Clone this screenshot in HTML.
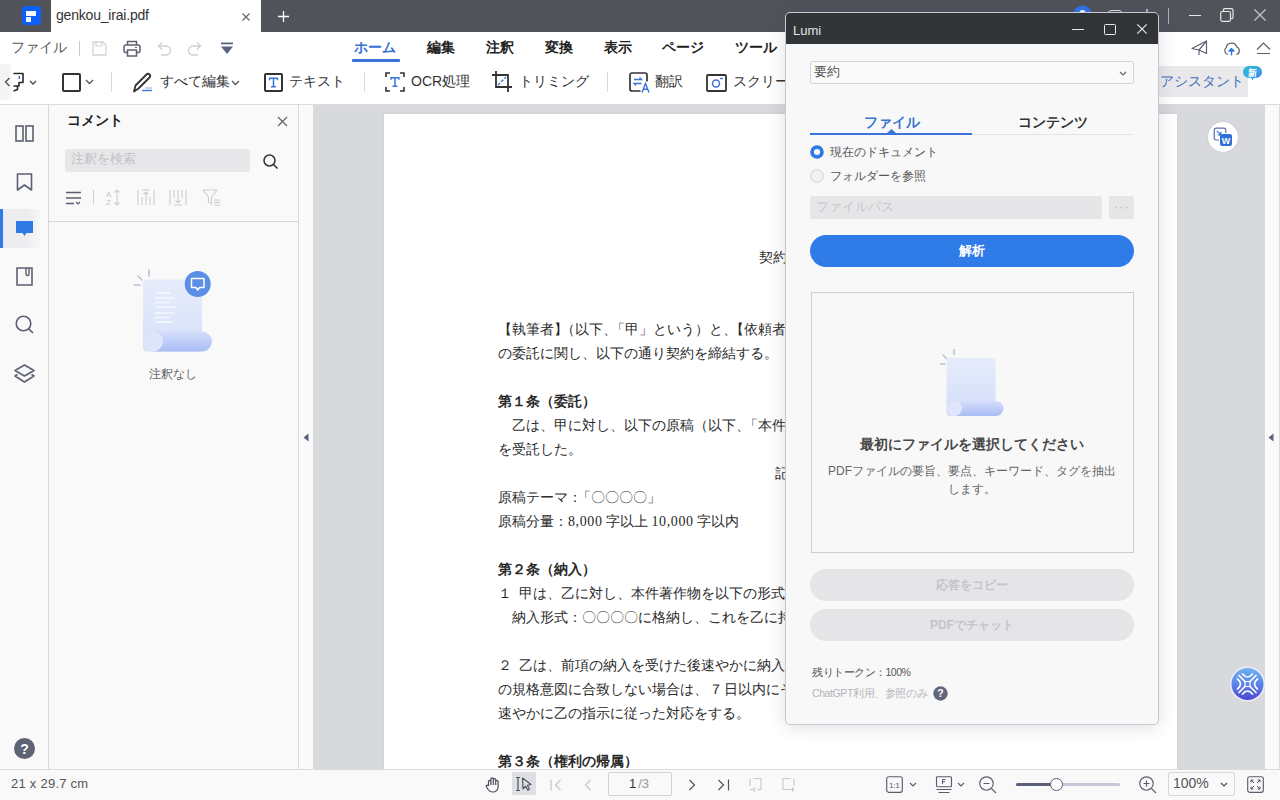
<!DOCTYPE html>
<html lang="ja">
<head>
<meta charset="utf-8">
<style>
*{box-sizing:border-box;margin:0;padding:0}
html,body{width:1280px;height:800px;overflow:hidden;background:#fff;font-family:"Liberation Sans",sans-serif;color:#333}
.a{position:absolute}
svg{position:absolute;overflow:visible}
.t{white-space:nowrap}
.dt{font-family:"Liberation Serif",serif;font-size:14px;line-height:16px;color:#2a2a2a}
.db{font-weight:bold}
.mb{font-size:14px;line-height:16px;font-weight:bold;color:#222}
#titlebar{left:0;top:0;width:1280px;height:32px;background:#50535a}
#tab{left:51px;top:0;width:210px;height:32px;background:#fff}
#toolbar{left:0;top:32px;width:1280px;height:73px;background:#fff;border-bottom:1px solid #dcdcdf}
#lside{left:0;top:105px;width:49px;height:664px;background:#f9f9fa;border-right:1px solid #d8d8db}
#cpanel{left:49px;top:105px;width:250px;height:664px;background:#f9f9fa;border-right:1px solid #d8d8db}
#handle{left:299px;top:105px;width:14px;height:664px;background:#fafafa}
#docarea{left:313px;top:105px;width:952px;height:664px;background:#d8d9dc}
#page{left:384px;top:114px;width:793px;height:655px;background:#fff;box-shadow:0 0 3px rgba(0,0,0,.06)}
#rstrip{left:1265px;top:105px;width:15px;height:664px;background:#fafafa;border-right:1px solid #dcdce0}
#status{left:0;top:769px;width:1280px;height:31px;background:#f9f9fa;border-top:1px solid #dcdcdf}
#dlg{left:785px;top:12px;width:374px;height:713px;background:#f8f8f9;border:1px solid #c8c8d0;border-radius:5px;overflow:hidden;box-shadow:0 2px 18px rgba(60,60,100,.16)}
#dlgtitle{left:0;top:0;width:372px;height:31px;background:#323538}
</style>
</head>
<body>
<div id="titlebar" class="a"></div>
<div id="tab" class="a"></div>
<svg style="left:1073px;top:5px" width="20" height="20"><circle cx="9.5" cy="10" r="9.5" fill="#2f74e8"/><circle cx="9.5" cy="8" r="3" fill="#fff"/></svg>
<div class="a" style="left:1108px;top:10px;width:14px;height:12px;border:1.3px solid #e0e0e0;border-radius:3px"></div>
<svg style="left:1141px;top:8px" width="12" height="14"><path d="M6 1V13M1 6H11" stroke="#e0e0e0" stroke-width="1.3"/></svg>
<div class="a" style="left:1168px;top:8px;width:1px;height:16px;background:#aeb0b6"></div>
<div class="a" style="left:1189px;top:15px;width:12px;height:1.2px;background:#e6e6e6"></div>
<svg style="left:1220px;top:8px" width="14" height="14"><path d="M3.5 3.5V1.5A1 1 0 0 1 4.5 0.7H11.5A1.5 1.5 0 0 1 13 2.2V9.5A1 1 0 0 1 12 10.5H10.5" fill="none" stroke="#e6e6e6" stroke-width="1.2"/><rect x="0.7" y="3.5" width="9.8" height="9.8" rx="1.5" fill="none" stroke="#e6e6e6" stroke-width="1.2"/></svg>
<svg style="left:1254px;top:9px" width="12" height="12"><path d="M0.5 0.5L11.5 11.5M11.5 0.5L0.5 11.5" stroke="#c8c8cc" stroke-width="1.2"/></svg>
<div id="toolbar" class="a"></div>
<!-- tab contents -->
<div class="a" style="left:22px;top:6px;width:19px;height:19px;background:#0d5ffb;border-radius:4px"></div>
<div class="a" style="left:26px;top:11px;width:10px;height:5px;background:#f4fbff"></div>
<div class="a" style="left:26px;top:17px;width:5px;height:5px;background:#eef8ff"></div>
<div class="a t" style="left:56px;top:6px;font-size:14px;line-height:18px;color:#333;letter-spacing:-0.2px">genkou_irai.pdf</div>
<svg style="left:242px;top:13px" width="9" height="8"><path d="M0.5 0.5L7.5 7.5M7.5 0.5L0.5 7.5" stroke="#666" stroke-width="1.2"/></svg>
<svg style="left:278px;top:11px" width="11" height="11"><path d="M5.5 0V11M0 5.5H11" stroke="#fff" stroke-width="1.3"/></svg>
<!-- row1 -->
<div class="a t" style="left:11px;top:39px;font-size:14px;line-height:16px;color:#555">ファイル</div>
<div class="a" style="left:79px;top:41px;width:1px;height:15px;background:#c8c8d6"></div>
<!-- save -->
<svg style="left:92px;top:41px" width="15" height="15"><path d="M1 1H11L14 4V14H1Z" fill="none" stroke="#d4d4d8" stroke-width="1.3"/><path d="M4 1V5H10V1" fill="none" stroke="#d4d4d8" stroke-width="1.2"/></svg>
<!-- print -->
<svg style="left:123px;top:40px" width="18" height="17"><path d="M4.5 5V1.5H13.5V5" fill="none" stroke="#5c6070" stroke-width="1.5"/><rect x="1" y="5" width="16" height="7.5" rx="2" fill="none" stroke="#5c6070" stroke-width="1.5"/><rect x="4.5" y="10" width="9" height="6" fill="#fff" stroke="#5c6070" stroke-width="1.5"/><path d="M12 7.5h2" stroke="#5c6070" stroke-width="1.2"/></svg>
<!-- undo -->
<svg style="left:156px;top:41px" width="16" height="15"><path d="M3 5H10A4.5 4.5 0 0 1 10 14H5" fill="none" stroke="#d0d0d6" stroke-width="1.4"/><path d="M6 1.5L2.5 5L6 8.5" fill="none" stroke="#d0d0d6" stroke-width="1.4"/></svg>
<!-- redo -->
<svg style="left:187px;top:41px" width="16" height="15"><path d="M13 5H6A4.5 4.5 0 0 0 6 14H11" fill="none" stroke="#d0d0d6" stroke-width="1.4"/><path d="M10 1.5L13.5 5L10 8.5" fill="none" stroke="#d0d0d6" stroke-width="1.4"/></svg>
<!-- quick access dropdown -->
<svg style="left:220px;top:42px" width="14" height="13"><rect x="1" y="0.5" width="12" height="1.8" fill="#5b6282"/><path d="M1 4.5H13L7 12Z" fill="#5b6282"/></svg>
<!-- menu tabs -->
<div class="a t mb" style="left:354px;top:39px;color:#3570d4">ホーム</div>
<div class="a" style="left:352px;top:59px;width:48px;height:3px;background:#3a74d8;border-radius:1px"></div>
<div class="a t mb" style="left:427px;top:39px">編集</div>
<div class="a t mb" style="left:486px;top:39px">注釈</div>
<div class="a t mb" style="left:545px;top:39px">変換</div>
<div class="a t mb" style="left:604px;top:39px">表示</div>
<div class="a t mb" style="left:662px;top:39px">ページ</div>
<div class="a t mb" style="left:735px;top:39px">ツール</div>
<!-- right row1 icons -->
<svg style="left:1191px;top:40px" width="18" height="17"><path d="M1 8.5L15.5 1V13.5L8 10Z" fill="none" stroke="#5c6070" stroke-width="1.2" stroke-linejoin="round"/><path d="M15.5 1L8 10V15" fill="none" stroke="#5c6070" stroke-width="1.2"/></svg>
<svg style="left:1223px;top:41px" width="19" height="15"><path d="M5 13.5A4 4 0 0 1 3.2 6.5A5.5 5.5 0 0 1 13.8 6A4 4 0 0 1 13.5 13.5" fill="none" stroke="#5c6070" stroke-width="1.2"/><path d="M8.5 14.5V7.5M6 10L8.5 7.5L11 10Z" fill="#2f7ae5" stroke="#2f7ae5" stroke-width="1.4" stroke-linejoin="round"/></svg>
<svg style="left:1256px;top:42px" width="16" height="13"><path d="M1 7.5L7.5 1L14 7.5M1 11.5H14" fill="none" stroke="#5c6070" stroke-width="1.2"/></svg>
<!-- row2 tools -->
<div class="a" style="left:0;top:64px;width:13px;height:36px;background:linear-gradient(90deg,#f4f4f7 70%,#fff)"></div>
<svg style="left:4px;top:77px" width="7" height="10"><path d="M5.5 1L1.5 5L5.5 9" fill="none" stroke="#555" stroke-width="1.4"/></svg>
<svg style="left:12px;top:72px" width="14" height="21"><path d="M1.5 1.5H11V10.5H7V14H1.5M5.5 14V17.5L1.5 19" fill="none" stroke="#2a2a2a" stroke-width="1.6" stroke-linejoin="round"/><path d="M7.3 4V7" stroke="#2f5fb0" stroke-width="1.4"/></svg>
<svg style="left:29px;top:80px" width="9" height="6"><path d="M1 1L4 4L7 1" fill="none" stroke="#444" stroke-width="1.3"/></svg>
<div class="a" style="left:62px;top:73px;width:19px;height:19px;border:2px solid #333;border-radius:2px"></div>
<svg style="left:85px;top:79px" width="9" height="6"><path d="M1 1L4.5 4.5L8 1" fill="none" stroke="#555" stroke-width="1.3"/></svg>
<div class="a" style="left:111px;top:72px;width:1px;height:20px;background:#d8d8de"></div>
<svg style="left:132px;top:72px" width="24" height="22"><path d="M2 19.5L3.5 13.5L14.5 2.5A2.1 2.1 0 0 1 17.5 5.5L6.5 16.5Z" fill="none" stroke="#333" stroke-width="1.8" stroke-linejoin="round"/><path d="M10 18.5H20" stroke="#3a74d8" stroke-width="1.4"/><path d="M13 16H20" stroke="#3a74d8" stroke-width="1" opacity=".6"/></svg>
<div class="a t" style="left:160px;top:73px;font-size:14px;line-height:16px;color:#333">すべて編集</div>
<svg style="left:231px;top:80px" width="9" height="6"><path d="M1 1L4.5 4.5L8 1" fill="none" stroke="#555" stroke-width="1.3"/></svg>
<div class="a" style="left:264px;top:73px;width:19px;height:19px;border:2px solid #333;border-radius:2px"></div>
<svg style="left:264px;top:73px" width="19" height="19"><path d="M5 5.3H14M5.6 4.6V7.3M13.4 4.6V7.3M9.5 5.3V13.8M7 13.8H12" fill="none" stroke="#3a74d8" stroke-width="1.5"/></svg>
<div class="a t" style="left:289px;top:73px;font-size:14px;line-height:16px;color:#333">テキスト</div>
<div class="a" style="left:364px;top:72px;width:1px;height:20px;background:#d8d8de"></div>
<svg style="left:385px;top:72px" width="20" height="20"><path d="M1 5V1H5M15 1H19V5M19 15V19H15M5 19H1V15" fill="none" stroke="#333" stroke-width="1.6"/></svg>
<svg style="left:385px;top:72px" width="20" height="20"><path d="M5.5 5.8H14.5M6.1 5.1V7.8M13.9 5.1V7.8M10 5.8V14.3M7.5 14.3H12.5" fill="none" stroke="#3a74d8" stroke-width="1.5"/></svg>
<div class="a t" style="left:411px;top:73px;font-size:14px;line-height:16px;color:#333">OCR処理</div>
<svg style="left:491px;top:70px" width="22" height="23"><path d="M5 1V17H21M1 5H17V22" fill="none" stroke="#333" stroke-width="1.8"/><path d="M7 15L15 7" stroke="#3a74d8" stroke-width="1.4" stroke-dasharray="3 1.5"/></svg>
<div class="a t" style="left:519px;top:73px;font-size:14px;line-height:16px;color:#333">トリミング</div>
<div class="a" style="left:607px;top:72px;width:1px;height:20px;background:#d8d8de"></div>
<svg style="left:629px;top:72px" width="22" height="21"><path d="M11.5 19H3A2 2 0 0 1 1 17V3A2 2 0 0 1 3 1H16A2 2 0 0 1 18 3V9.5" fill="none" stroke="#333" stroke-width="1.7"/><path d="M5 7.5H12.5L10.5 5.5M12.5 11.5H5L7 13.5" fill="none" stroke="#3a74d8" stroke-width="1.3"/><path d="M13 20.5L16.5 11.5L20 20.5M14.2 17.3H18.8" fill="none" stroke="#3a74d8" stroke-width="1.4"/></svg>
<div class="a t" style="left:655px;top:73px;font-size:14px;line-height:16px;color:#333">翻訳</div>
<svg style="left:706px;top:72px" width="21" height="20"><rect x="1" y="3" width="19" height="16" rx="1" fill="none" stroke="#333" stroke-width="1.8"/><circle cx="10" cy="11.5" r="3.5" fill="none" stroke="#3a74d8" stroke-width="1.5"/><path d="M14 6.5H17" stroke="#3a74d8" stroke-width="1.4"/></svg>
<div class="a t" style="left:733px;top:73px;font-size:14px;line-height:16px;color:#333">スクリーンショット</div>
<!-- AI assistant -->
<div class="a" style="left:1100px;top:66px;width:148px;height:31px;background:#e9e9ec"></div>
<div class="a t" style="left:1160px;top:73px;font-size:14px;line-height:16px;color:#3f6fbf">アシスタント</div>
<svg style="left:1242px;top:65px" width="22" height="17"><defs><linearGradient id="gnew" x1="0" y1="0" x2="1" y2="1"><stop offset="0" stop-color="#2bbcc8"/><stop offset=".6" stop-color="#3aa0e8"/><stop offset="1" stop-color="#2f74e0"/></linearGradient></defs><path d="M7 1H14A6 6 0 0 1 14 13H12L10 15.5L9.5 13H7A6 6 0 0 1 7 1Z" fill="url(#gnew)"/><text x="10.5" y="11" font-size="9" font-weight="bold" fill="#fff" text-anchor="middle">新</text></svg>

<div id="lside" class="a"></div>
<div id="cpanel" class="a"></div>
<div id="handle" class="a"></div>
<!-- left sidebar icons -->
<svg style="left:15px;top:125px" width="19" height="17"><rect x="1" y="1" width="7" height="15" fill="none" stroke="#5c6070" stroke-width="1.6"/><rect x="11" y="1" width="7" height="15" fill="none" stroke="#5c6070" stroke-width="1.6"/></svg>
<svg style="left:16px;top:173px" width="17" height="18"><path d="M1.5 1H15.5V17L8.5 12L1.5 17Z" fill="none" stroke="#5c6070" stroke-width="1.6" stroke-linejoin="round"/></svg>
<div class="a" style="left:0;top:209px;width:40px;height:39px;background:linear-gradient(90deg,#ededf0 70%,#f7f7f8)"></div>
<div class="a" style="left:0;top:209px;width:3px;height:39px;background:#2f7ae5"></div>
<svg style="left:15px;top:220px" width="19" height="18"><path d="M1 1H18V13H11.5L9.5 16L7.5 13H1Z" fill="#2f7ae5"/></svg>
<svg style="left:16px;top:267px" width="17" height="19"><path d="M1 1H16V18H1Z" fill="none" stroke="#5c6070" stroke-width="1.6"/><path d="M10 1V7A1.5 1.5 0 0 0 13 7V1" fill="none" stroke="#5c6070" stroke-width="1.4"/></svg>
<svg style="left:15px;top:315px" width="19" height="20"><circle cx="8.5" cy="8.5" r="7.3" fill="none" stroke="#5c6070" stroke-width="1.6"/><path d="M13.8 13.8L18 18" stroke="#5c6070" stroke-width="1.7"/></svg>
<svg style="left:14px;top:364px" width="21" height="20"><path d="M10.5 1L20 6.5L10.5 12L1 6.5Z" fill="none" stroke="#5c6070" stroke-width="1.6" stroke-linejoin="round"/><path d="M3.5 10.5L1 12L10.5 18L20 12L17.5 10.5" fill="none" stroke="#5c6070" stroke-width="1.6" stroke-linejoin="round"/></svg>
<svg style="left:14px;top:738px" width="21" height="21"><circle cx="10.5" cy="10.5" r="10.5" fill="#5e6275"/><text x="10.5" y="15.5" font-size="14" font-weight="bold" fill="#fff" text-anchor="middle" font-family="Liberation Sans">?</text></svg>
<!-- comment panel -->
<div class="a t" style="left:67px;top:112px;font-size:14px;line-height:16px;font-weight:bold;color:#222">コメント</div>
<svg style="left:277px;top:116px" width="11" height="11"><path d="M1 1L10 10M10 1L1 10" stroke="#666" stroke-width="1.3"/></svg>
<div class="a" style="left:65px;top:149px;width:185px;height:23px;background:#e7e7e9;border-radius:3px"></div>
<div class="a t" style="left:71px;top:152px;font-size:12.5px;line-height:15px;color:#c2c2c6">注釈を検索</div>
<svg style="left:263px;top:154px" width="16" height="15"><circle cx="6.5" cy="6.5" r="5.5" fill="none" stroke="#333" stroke-width="1.5"/><path d="M10.5 10.5L14.5 14.5" stroke="#333" stroke-width="1.6"/></svg>
<svg style="left:66px;top:190px" width="16" height="16"><path d="M0 2.5H15M0 8H15M0 13.5H8" stroke="#5c6070" stroke-width="1.3"/><path d="M10 12L12 14L14 12" fill="none" stroke="#5c6070" stroke-width="1.2"/></svg>
<div class="a" style="left:93px;top:190px;width:1px;height:14px;background:#d0d0d6"></div>
<svg style="left:106px;top:189px" width="16" height="17"><text x="0" y="8" font-size="8" fill="#c8c8ce" font-family="Liberation Sans">A</text><text x="0" y="16" font-size="8" fill="#c8c8ce" font-family="Liberation Sans">Z</text><path d="M11 1V16M8.5 3.5L11 1L13.5 3.5M8.5 13.5L11 16L13.5 13.5" fill="none" stroke="#cdcdd3" stroke-width="1.1"/></svg>
<svg style="left:137px;top:189px" width="18" height="17"><path d="M1 1V16M17 1V16M5 1H13M9 3V16M6.5 5.5L9 3L11.5 5.5M5 8V16M13 8V16" fill="none" stroke="#cdcdd3" stroke-width="1.1"/></svg>
<svg style="left:169px;top:189px" width="18" height="17"><path d="M1 1V16M17 1V16M5 16H13M9 1V14M6.5 11.5L9 14L11.5 11.5M5 1V9M13 1V9" fill="none" stroke="#cdcdd3" stroke-width="1.1"/></svg>
<svg style="left:202px;top:189px" width="19" height="17"><path d="M1 1H15L9.5 8V15L6.5 13V8Z" fill="none" stroke="#cdcdd3" stroke-width="1.1" stroke-linejoin="round"/><path d="M12 11H18M12 13.5H18M12 16H18" stroke="#c8c8ce" stroke-width="1"/></svg>
<div class="a" style="left:49px;top:221px;width:249px;height:1px;background:#d8d8dc"></div>
<!-- empty illustration -->
<svg style="left:130px;top:266px" width="90" height="90">
 <defs>
  <linearGradient id="gdoc" x1="0" y1="0" x2="0" y2="1"><stop offset="0" stop-color="#e6ecfb"/><stop offset="1" stop-color="#d6e0fa"/></linearGradient>
  <linearGradient id="groll" x1="0" y1="0" x2="0" y2="1"><stop offset="0" stop-color="#d5defb"/><stop offset="1" stop-color="#a9bdf5"/></linearGradient>
 </defs>
 <path d="M4 19H10M8 10L12 14M19 4V10" stroke="#b8c0d4" stroke-width="1.6" stroke-linecap="round"/>
 <rect x="13" y="13.5" width="59" height="72" rx="4" fill="url(#gdoc)"/>
 <path d="M23 65.5H72A10 10 0 0 1 72 85.5H23Z" fill="url(#groll)"/>
 <circle cx="23" cy="75.5" r="10" fill="#dfe6fb"/>
 <path d="M25 27H40M25 32H45M25 36.5H40M25 41H45M25 47H45M25 51.5H40M25 56H43" stroke="#fff" stroke-width="1.3" opacity=".75"/>
 <circle cx="67.7" cy="18" r="13" fill="#5b8ee6"/>
 <path d="M61.5 12.5H74V21.5H69.5L67.7 24L66 21.5H61.5Z" fill="none" stroke="#fff" stroke-width="1.5" stroke-linejoin="round"/>
</svg>
<div class="a t" style="left:149px;top:367px;font-size:12px;line-height:14px;color:#666">注釈なし</div>

<div id="docarea" class="a"></div>
<div id="page" class="a"></div>
<div class="a" style="left:384px;top:114px;width:401px;height:654px;overflow:hidden">
<div class="a t dt" style="left:375px;top:136px">契約書</div>
<div class="a t dt" style="left:114px;top:208px">【執筆者<span style="margin-right:-7px">】</span>（以下<span style="margin-right:-6px">、</span>「甲」という）と<span style="margin-right:-7px">、</span>【依頼者】</div>
<div class="a t dt" style="left:114px;top:232px">の委託に関し、以下の通り契約を締結する。</div>
<div class="a t dt db" style="left:114px;top:280px">第１条（委託）</div>
<div class="a t dt" style="left:114px;top:304px">　乙は、甲に対し、以下の原稿（以下<span style="margin-right:-6px">、</span>「本件原稿」</div>
<div class="a t dt" style="left:114px;top:328px">を受託した。</div>
<div class="a t dt" style="left:391px;top:352px">記</div>
<div class="a t dt" style="left:114px;top:376px">原稿テーマ<span style="margin-right:-5px">：</span>「〇〇〇〇」</div>
<div class="a t dt" style="left:114px;top:400px">原稿分量：<span style="letter-spacing:.6px">8,000</span> 字以上 <span style="letter-spacing:.6px">10,000</span> 字以内</div>
<div class="a t dt db" style="left:114px;top:448px">第２条（納入）</div>
<div class="a t dt" style="left:114px;top:472px">１<span style="margin-right:-7px">　</span>甲は、乙に対し、本件著作物を以下の形式で</div>
<div class="a t dt" style="left:114px;top:496px">　納入形式：〇〇〇〇に格納し、これを乙に持参</div>
<div class="a t dt" style="left:114px;top:544px">２<span style="margin-right:-7px">　</span>乙は、前項の納入を受けた後速やかに納入物</div>
<div class="a t dt" style="left:114px;top:568px">の規格意図に合致しない場合は、<span style="margin:0 1px">７</span>日以内にその</div>
<div class="a t dt" style="left:114px;top:592px">速やかに乙の指示に従った対応をする。</div>
<div class="a t dt db" style="left:114px;top:640px">第３条（権利の帰属）</div>
</div>

<div id="rstrip" class="a"></div>
<svg style="left:303px;top:433px" width="6" height="9"><path d="M5.5 0.5V8.5L0.5 4.5Z" fill="#5b6078"/></svg>
<svg style="left:1268px;top:433px" width="6" height="9"><path d="M5.5 0.5V8.5L0.5 4.5Z" fill="#5b6078"/></svg>
<div class="a" style="left:1208px;top:122px;width:30px;height:30px;border-radius:50%;background:#fff;box-shadow:0 0 2px rgba(0,0,0,.12)"></div>
<svg style="left:1213px;top:127px" width="21" height="21"><path d="M6 13H3.2A2 2 0 0 1 1.2 11V3.2A2 2 0 0 1 3.2 1.2H10.8A2 2 0 0 1 12.8 3.2V6" fill="none" stroke="#5a6ea8" stroke-width="1.2"/><path d="M3.8 3.8L7.5 7.5M7.8 4.8V7.8H4.8" fill="none" stroke="#3b78d8" stroke-width="1.2"/><rect x="7" y="7" width="12" height="12" rx="2" fill="#2f6fd8"/><text x="13" y="16.6" font-size="9" font-weight="bold" fill="#fff" text-anchor="middle" font-family="Liberation Sans">W</text></svg>
<svg style="left:1229px;top:666px" width="37" height="37"><defs><linearGradient id="gai" x1="0" y1="0" x2="0" y2="1"><stop offset="0" stop-color="#6fb2f2"/><stop offset=".55" stop-color="#5a7fe6"/><stop offset="1" stop-color="#4f45d2"/></linearGradient></defs><circle cx="18.5" cy="18" r="17.5" fill="#eef0fb" opacity=".9"/><circle cx="18.5" cy="18" r="16" fill="url(#gai)"/><g transform="translate(18.5 18)" stroke="#fff" stroke-width="1.7" fill="none" stroke-linecap="round"><path d="M-2.5 -2.5L-8.5 -8.5M2.5 -2.5L8.5 -8.5M-2.5 2.5L-8.5 8.5M2.5 2.5L8.5 8.5"/><path d="M-2.5 -2.5H2.5V2.5H-2.5Z" stroke-width="1.2"/><path d="M-5 -10Q0 -4 5 -10M-5 10Q0 4 5 10M-10 -5Q-4 0 -10 5M10 -5Q4 0 10 5"/></g></svg>

<div id="status" class="a"></div>
<div class="a t" style="left:11px;top:776px;font-size:13px;line-height:16px;color:#555;letter-spacing:.25px">21 x 29.7 cm</div>
<svg style="left:485px;top:777px" width="15" height="16"><path d="M3.5 9V4.5A1.2 1.2 0 0 1 5.9 4.5V8M5.9 8V2A1.2 1.2 0 0 1 8.3 2V8M8.3 8V2.8A1.2 1.2 0 0 1 10.7 2.8V8M10.7 8V4.5A1.2 1.2 0 0 1 13.1 4.5V10A5 5 0 0 1 8 15H7.5A5 5 0 0 1 3.5 13L1.2 9.5A1.1 1.1 0 0 1 3 8.5L3.5 9" fill="none" stroke="#4a4e5c" stroke-width="1.2" stroke-linejoin="round"/></svg>
<div class="a" style="left:512px;top:772px;width:24px;height:23px;background:#dedfe3;border-radius:1px"></div>
<svg style="left:515px;top:776px" width="18" height="16"><path d="M1 1.5H5M1 14.5H5M3 1.5V14.5" stroke="#50545f" stroke-width="1.2" fill="none"/><path d="M7.5 2L16 8.5L12.3 9.3L14.5 13.2L12.8 14.2L10.6 10.3L8 12.8Z" fill="none" stroke="#50545f" stroke-width="1.2" stroke-linejoin="round"/></svg>
<svg style="left:550px;top:779px" width="13" height="12"><path d="M1 0.5V11.5M10.5 1L5.5 6L10.5 11" fill="none" stroke="#c8c9d0" stroke-width="1.3"/></svg>
<svg style="left:584px;top:779px" width="8" height="12"><path d="M6.5 1L1.5 6L6.5 11" fill="none" stroke="#c8c9d0" stroke-width="1.3"/></svg>
<div class="a" style="left:608px;top:772px;width:64px;height:24px;border:1px solid #cfd0d8;border-radius:2px;background:#f9f9fa"></div>
<div class="a t" style="left:629px;top:776px;font-size:13px;line-height:16px;color:#333">1<span style="color:#999;margin-left:2px">/3</span></div>
<svg style="left:688px;top:779px" width="8" height="12"><path d="M1.5 1L6.5 6L1.5 11" fill="none" stroke="#50545f" stroke-width="1.2"/></svg>
<svg style="left:717px;top:779px" width="13" height="12"><path d="M1.5 1L6.5 6L1.5 11M11.5 0.5V11.5" fill="none" stroke="#50545f" stroke-width="1.2"/></svg>
<svg style="left:749px;top:777px" width="13" height="16"><path d="M4 1.5H12V12.5H8" fill="none" stroke="#c8c9d0" stroke-width="1.2"/><path d="M1 1.5V9" stroke="#c8c9d0" stroke-width="1.2"/><path d="M6 10.5L4 12.5L6 14.5M4 12.5H1" fill="none" stroke="#c8c9d0" stroke-width="1.1"/></svg>
<svg style="left:782px;top:777px" width="14" height="16"><path d="M9 12.5H1V1.5H9" fill="none" stroke="#c8c9d0" stroke-width="1.2"/><path d="M12 1.5V9" stroke="#c8c9d0" stroke-width="1.2"/><path d="M10 10.5L12 12.5L10 14.5M12 12.5H8.5" fill="none" stroke="#c8c9d0" stroke-width="1.1"/></svg>
<svg style="left:886px;top:776px" width="17" height="17"><rect x="0.7" y="0.7" width="15.6" height="15.6" rx="2" fill="none" stroke="#5a5e6c" stroke-width="1.15"/><text x="8.5" y="11.5" font-size="7.5" fill="#4a4e5c" text-anchor="middle" font-family="Liberation Sans">1:1</text></svg>
<svg style="left:909px;top:782px" width="8" height="6"><path d="M1 1L4 4L7 1" fill="none" stroke="#5a5e6c" stroke-width="1.15"/></svg>
<svg style="left:935px;top:776px" width="18" height="17"><rect x="1.5" y="0.7" width="15" height="10" rx="1" fill="none" stroke="#5a5e6c" stroke-width="1.15"/><path d="M1.5 13.5H16.5M3.5 16.5H14.5" stroke="#5a5e6c" stroke-width="1.15"/><path d="M7.5 3.5H10.5M7.5 3.5V8M7.5 5.7H10" stroke="#4a4e5c" stroke-width="0.9" fill="none"/></svg>
<svg style="left:957px;top:782px" width="8" height="6"><path d="M1 1L4 4L7 1" fill="none" stroke="#5a5e6c" stroke-width="1.15"/></svg>
<svg style="left:979px;top:776px" width="18" height="18"><circle cx="7.5" cy="7.5" r="6.7" fill="none" stroke="#5a5e6c" stroke-width="1.15"/><path d="M4.5 7.5H10.5M12.3 12.3L17 17" stroke="#5a5e6c" stroke-width="1.15"/></svg>
<div class="a" style="left:1016px;top:783px;width:104px;height:3px;background:#c6c8d6;border-radius:2px"></div>
<div class="a" style="left:1016px;top:783px;width:40px;height:3px;background:#5b6078;border-radius:2px"></div>
<div class="a" style="left:1050px;top:778px;width:13px;height:13px;background:#fff;border:1.3px solid #5b6078;border-radius:50%"></div>
<svg style="left:1139px;top:776px" width="18" height="18"><circle cx="7.5" cy="7.5" r="6.7" fill="none" stroke="#5a5e6c" stroke-width="1.15"/><path d="M4.5 7.5H10.5M7.5 4.5V10.5M12.3 12.3L17 17" stroke="#5a5e6c" stroke-width="1.15"/></svg>
<div class="a" style="left:1168px;top:772px;width:67px;height:24px;border:1px solid #d6d7de;border-radius:2px;background:#f9f9fa"></div>
<div class="a t" style="left:1173px;top:775px;font-size:14px;line-height:17px;color:#555">100%</div>
<svg style="left:1220px;top:782px" width="8" height="6"><path d="M1 1L4 4L7 1" fill="none" stroke="#4a4e5c" stroke-width="1.2"/></svg>
<svg style="left:1247px;top:776px" width="17" height="17"><rect x="0.7" y="0.7" width="15.6" height="15.6" rx="2" fill="none" stroke="#5a5e6c" stroke-width="1.15"/><path d="M4 4L7 7M4 4V6.3M4 4H6.3M13 4L10 7M13 4V6.3M13 4H10.7M4 13L7 10M4 13V10.7M4 13H6.3M13 13L10 10M13 13V10.7M13 13H10.7" stroke="#4a4e5c" stroke-width="1" fill="none"/></svg>

<div id="dlg" class="a">
  <div id="dlgtitle" class="a"></div>
  <div class="a t" style="left:7px;top:10px;font-size:13px;line-height:16px;color:#e4e4e4">Lumi</div>
  <div class="a" style="left:286px;top:16px;width:12px;height:1.2px;background:#e8e8e8"></div>
  <div class="a" style="left:318px;top:11px;width:12px;height:11px;border:1.2px solid #e8e8e8;border-radius:1.5px"></div>
  <svg style="left:351px;top:11px" width="10" height="10"><path d="M0.3 0.3L9.7 9.7M9.7 0.3L0.3 9.7" stroke="#e8e8e8" stroke-width="1.2"/></svg>
  <div class="a" style="left:24px;top:48px;width:324px;height:23px;border:1px solid #d2d2da;border-radius:2px;background:#fafafb"></div>
  <div class="a t" style="left:28px;top:51px;font-size:13px;line-height:16px;color:#555">要約</div>
  <svg style="left:333px;top:58px" width="8" height="5"><path d="M1 1L4 4L7 1" fill="none" stroke="#666" stroke-width="1.1"/></svg>
  <div class="a t" style="left:78px;top:100px;font-size:14px;line-height:18px;font-weight:bold;color:#3a74d0">ファイル</div>
  <div class="a t" style="left:232px;top:100px;font-size:14px;line-height:18px;font-weight:bold;color:#333">コンテンツ</div>
  <div class="a" style="left:24px;top:121px;width:323px;height:1px;background:#e4e4e8"></div>
  <div class="a" style="left:24px;top:120px;width:162px;height:2px;background:#3a74d8"></div>
  <svg style="left:100px;top:116px" width="11" height="5"><path d="M0 5L5.5 0L11 5Z" fill="#3a74d8"/></svg>
  <svg style="left:24px;top:132px" width="14" height="14"><circle cx="7" cy="7" r="4.9" fill="#fff" stroke="#2f7ae5" stroke-width="3.8"/></svg>
  <div class="a t" style="left:44px;top:131px;font-size:12px;line-height:16px;color:#555">現在のドキュメント</div>
  <svg style="left:24px;top:156px" width="14" height="14"><circle cx="7" cy="7" r="6.3" fill="#f2f2f4" stroke="#d6d6dc" stroke-width="1.1"/></svg>
  <div class="a t" style="left:44px;top:155px;font-size:12px;line-height:16px;color:#555">フォルダーを参照</div>
  <div class="a" style="left:24px;top:183px;width:292px;height:23px;background:#e6e6e8;border-radius:2px"></div>
  <div class="a t" style="left:30px;top:186px;font-size:13px;line-height:16px;color:#c6c6ca">ファイルパス</div>
  <div class="a" style="left:323px;top:183px;width:25px;height:23px;background:#e6e6e8;border-radius:2px"></div>
  <svg style="left:328px;top:193px" width="15" height="3"><circle cx="2" cy="1.5" r="1" fill="#c6c6ca"/><circle cx="7.5" cy="1.5" r="1" fill="#c6c6ca"/><circle cx="13" cy="1.5" r="1" fill="#c6c6ca"/></svg>
  <div class="a" style="left:24px;top:222px;width:324px;height:32px;background:#2f7be8;border-radius:16px"></div>
  <div class="a t" style="left:24px;top:230px;width:324px;text-align:center;font-size:13px;line-height:16px;font-weight:bold;color:#fff">解析</div>
  <div class="a" style="left:25px;top:279px;width:323px;height:261px;border:1px solid #cdcdd4;background:#f8f8f9"></div>
  <svg style="left:146px;top:333px" width="75" height="75">
   <defs>
    <linearGradient id="gdoc2" x1="0" y1="0" x2="0" y2="1"><stop offset="0" stop-color="#e6ecfb"/><stop offset="1" stop-color="#d3ddf9"/></linearGradient>
    <linearGradient id="groll2" x1="0" y1="0" x2="0" y2="1"><stop offset="0" stop-color="#d5defb"/><stop offset="1" stop-color="#a9bdf5"/></linearGradient>
   </defs>
   <path d="M8.5 18H13M11 9L14.5 12.5M22 3.5V8.5" stroke="#b8c0d4" stroke-width="1.5" stroke-linecap="round"/>
   <rect x="14.5" y="12" width="49" height="58" rx="3.5" fill="url(#gdoc2)"/>
   <path d="M23 55H64A7.5 7.5 0 0 1 64 70H23Z" fill="url(#groll2)"/>
   <circle cx="22.5" cy="62.5" r="7.5" fill="#dfe6fb"/>
  </svg>
  <div class="a t" style="left:24px;top:423px;width:324px;text-align:center;font-size:14px;line-height:17px;font-weight:bold;color:#474747">最初にファイルを選択してください</div>
  <div class="a t" style="left:24px;top:449px;width:324px;text-align:center;font-size:12px;line-height:18px;color:#666">PDFファイルの要旨、要点、キーワード、タグを抽出<br>します。</div>
  <div class="a" style="left:24px;top:556px;width:324px;height:32px;background:#e5e5e7;border-radius:16px"></div>
  <div class="a t" style="left:24px;top:564px;width:324px;text-align:center;font-size:12px;line-height:16px;font-weight:bold;color:#c4c4c8">応答をコピー</div>
  <div class="a" style="left:24px;top:596px;width:324px;height:32px;background:#e5e5e7;border-radius:16px"></div>
  <div class="a t" style="left:24px;top:604px;width:324px;text-align:center;font-size:12px;line-height:16px;font-weight:bold;color:#c4c4c8">PDFでチャット</div>
  <div class="a t" style="left:26px;top:652px;font-size:10.5px;line-height:14px;color:#555;letter-spacing:-0.5px">残りトークン：100%</div>
  <div class="a t" style="left:26px;top:673px;font-size:10.5px;line-height:14px;color:#b4b4b8;letter-spacing:-0.4px">ChatGPT利用、参照のみ</div>
  <svg style="left:147px;top:673px" width="15" height="15"><circle cx="7.5" cy="7.5" r="7.2" fill="#62667c"/><text x="7.5" y="11.3" font-size="10.5" font-weight="bold" fill="#fff" text-anchor="middle" font-family="Liberation Sans">?</text></svg>
</div>
</body>
</html>
